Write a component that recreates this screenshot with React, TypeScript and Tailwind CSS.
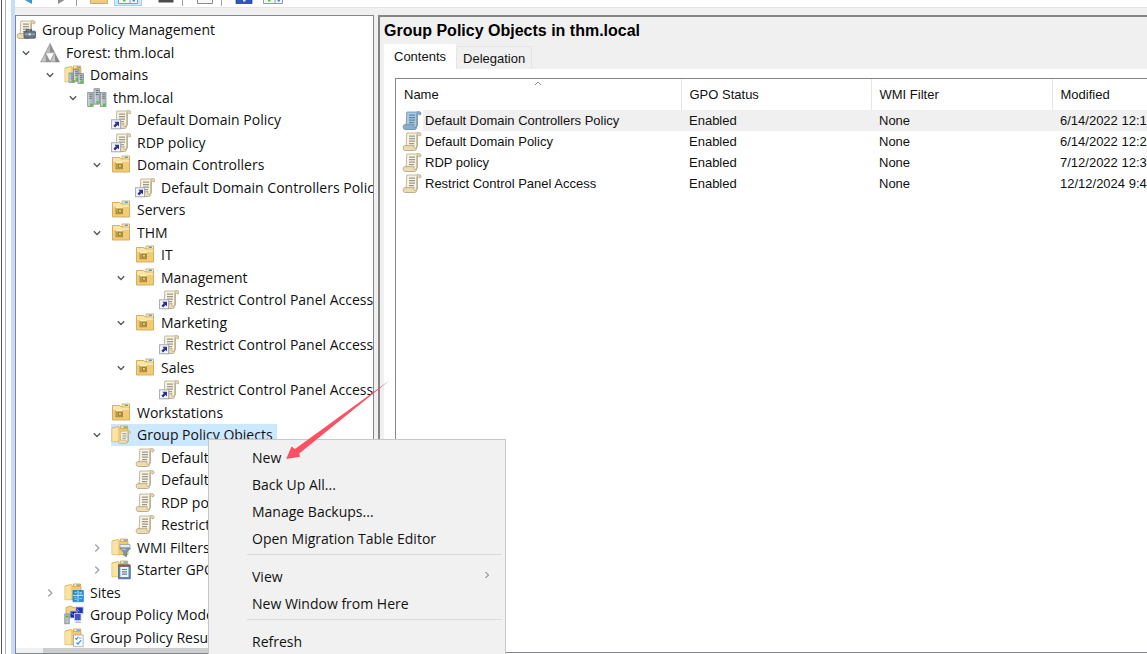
import type { ReactNode } from "react";

type IconName =
  | "console"
  | "forest"
  | "domains"
  | "domain"
  | "link"
  | "ou"
  | "gpoFolder"
  | "gpo"
  | "wmi"
  | "starter"
  | "sites"
  | "modeling"
  | "results";

type TreeNode = { label: string; icon: IconName; level: number; open?: boolean; selected?: boolean };

const tree: TreeNode[] = [
  { label: "Group Policy Management", icon: "console", level: 0 },
  { label: "Forest: thm.local", icon: "forest", level: 1, open: true },
  { label: "Domains", icon: "domains", level: 2, open: true },
  { label: "thm.local", icon: "domain", level: 3, open: true },
  { label: "Default Domain Policy", icon: "link", level: 4 },
  { label: "RDP policy", icon: "link", level: 4 },
  { label: "Domain Controllers", icon: "ou", level: 4, open: true },
  { label: "Default Domain Controllers Policy", icon: "link", level: 5 },
  { label: "Servers", icon: "ou", level: 4 },
  { label: "THM", icon: "ou", level: 4, open: true },
  { label: "IT", icon: "ou", level: 5 },
  { label: "Management", icon: "ou", level: 5, open: true },
  { label: "Restrict Control Panel Access", icon: "link", level: 6 },
  { label: "Marketing", icon: "ou", level: 5, open: true },
  { label: "Restrict Control Panel Access", icon: "link", level: 6 },
  { label: "Sales", icon: "ou", level: 5, open: true },
  { label: "Restrict Control Panel Access", icon: "link", level: 6 },
  { label: "Workstations", icon: "ou", level: 4 },
  { label: "Group Policy Objects", icon: "gpoFolder", level: 4, open: true, selected: true },
  { label: "Default Domain Controllers Policy", icon: "gpo", level: 5 },
  { label: "Default Domain Policy", icon: "gpo", level: 5 },
  { label: "RDP policy", icon: "gpo", level: 5 },
  { label: "Restrict Control Panel Access", icon: "gpo", level: 5 },
  { label: "WMI Filters", icon: "wmi", level: 4, open: false },
  { label: "Starter GPOs", icon: "starter", level: 4, open: false },
  { label: "Sites", icon: "sites", level: 2, open: false },
  { label: "Group Policy Modeling", icon: "modeling", level: 2 },
  { label: "Group Policy Results", icon: "results", level: 2 },
];

const indent = ["pl-0", "pl-0", "pl-[24px]", "pl-[47px]", "pl-[71px]", "pl-[95px]", "pl-[119px]"];

const policies = [
  { name: "Default Domain Controllers Policy", modified: "6/14/2022 12:1" },
  { name: "Default Domain Policy", modified: "6/14/2022 12:2" },
  { name: "RDP policy", modified: "7/12/2022 12:3" },
  { name: "Restrict Control Panel Access", modified: "12/12/2024 9:4" },
];

function Scroll({ blue = false }: { blue?: boolean }) {
  const paper = blue ? "#a9c8e0" : "#faf3dc";
  const edge = blue ? "#6f90aa" : "#b3a88c";
  const curl = blue ? "#86afcf" : "#ecdcae";
  const ink = blue ? "#5d87a8" : "#979797";
  return (
    <g>
      <path d="M4.800 1h11.200l-1 2v12.500l-2.500 1.500H4z" fill={paper} stroke={edge} strokeWidth=".8" />
      <path d="M15.200 2.200v13" stroke={edge} strokeWidth="1.200" />
      <path d="M14.800 1c2.500-.7 4.300 0 4.200 1.400-.1 1.500-1.900 1.700-2.600.8" fill={curl} stroke={edge} strokeWidth="1" />
      <path d="M1.300 15.700c-.3-1.400.5-2.100 1.700-2h9.300c-.8.9-.8 1.800.2 2.500.8.500 2-.1 2-1.300v1.600c0 1.300-.8 2-2.100 2H3.100c-1 0-1.700-.9-1.800-1.800z" fill={curl} stroke={edge} strokeWidth=".9" />
      <path d="M7 4.200h6M7 6.700h6M7 9.200h6M7 11.600h5" stroke={ink} strokeWidth="1.200" />
    </g>
  );
}

function Folder() {
  return (
    <g>
      <path d="M9.500 3.500V1h7v2.800z" fill="#fff6d8" stroke="#c79c4a" strokeWidth=".8" />
      <path d="M1 3l6-1.500 2 1.800h8v13.400H1z" fill="#efc870" stroke="#d4a653" strokeWidth=".8" />
      <path d="M1.200 3.400l6-1.400v14.500h-6z" fill="#fbe3a2" />
      <path d="M12.500 2.200h3.500" stroke="#4a9bd8" strokeWidth="1.200" />
    </g>
  );
}

function Server({ x, y, h }: { x: number; y: number; h: number }) {
  return (
    <g>
      <rect x={x} y={y} width="5.500" height={h} fill="#b3bcc2" stroke="#7d878e" strokeWidth=".7" />
      <path d={`M${x + 1} ${y + 1.8}h3.500M${x + 1} ${y + 3.8}h3.500M${x + 1} ${y + 5.8}h3.500`} stroke="#65717a" strokeWidth=".9" />
      <path d={`M${x + 1.2} ${y + 1}v${h - 2}`} stroke="#e3e8eb" strokeWidth=".8" />
      <rect x={x + 2.5} y={y + h - 2.8} width="2.400" height="2.200" fill="#37d51c" />
    </g>
  );
}

const drawings: Record<IconName, ReactNode> = {
  console: (
    <g>
      <Scroll />
      <path d="M10.500 11.500V9.800h5v1.700" fill="none" stroke="#45515c" strokeWidth="1.200" />
      <rect x="8" y="11.200" width="11.500" height="7" rx=".8" fill="#687887" stroke="#475562" strokeWidth=".8" />
      <path d="M8.500 14.200h10.500" stroke="#a9b6c2" />
      <rect x="12.700" y="13.300" width="2" height="2" fill="#dfe6ec" />
    </g>
  ),
  forest: (
    <g strokeLinejoin="round" strokeWidth=".6">
      <path d="M10 .4l4.600 9.400H5.400z" fill="#b9b9b9" stroke="#8c8c8c" />
      <path d="M10 .4l4.600 9.400H10z" fill="#8f8f8f" />
      <path d="M5.400 9.800h9.200L10 18.900z" fill="#fdfdfd" stroke="#9a9a9a" />
      <path d="M5.300 10L10 18.900H.6z" fill="#c4c4c4" stroke="#8c8c8c" />
      <path d="M5.300 10l4.700 8.900H6z" fill="#939393" />
      <path d="M14.700 10l4.700 8.900H10z" fill="#c4c4c4" stroke="#8c8c8c" />
      <path d="M14.700 10l4.700 8.900h-4z" fill="#888" />
    </g>
  ),
  domains: (
    <g>
      <Folder />
      <Server x={5} y={8} h={9.500} />
      <Server x={9.500} y={4.500} h={11.500} />
      <Server x={14} y={8.500} h={10} />
    </g>
  ),
  domain: (
    <g>
      <Server x={0.700} y={4.500} h={14} />
      <Server x={7} y={0.700} h={15.500} />
      <Server x={13.500} y={4.500} h={14} />
    </g>
  ),
  link: (
    <g>
      <g transform="translate(1)">
        <Scroll />
      </g>
      <rect x=".6" y="9.800" width="9" height="9" fill="#f8f8fc" stroke="#a3a8b8" strokeWidth="1" />
      <path d="M3.300 11.800h4.700v4.700l-1.500-1.500-2.400 2.400-1.700-1.700 2.400-2.400z" fill="#312e8e" />
    </g>
  ),
  ou: (
    <g>
      <path d="M11 4V1h7.500v4z" fill="#fff6d8" stroke="#c79c4a" strokeWidth=".8" />
      <path d="M1.500 2.500h7l2 1.500h8v13h-17z" fill="#f0cc76" stroke="#d4a653" strokeWidth=".9" />
      <path d="M2 3h6.300l2 1.500H18v2.500H2z" fill="#fbe4a5" />
      <path d="M13.500 2.300H17" stroke="#4a9bd8" strokeWidth="1.300" />
      <rect x="5" y="7.800" width="6.500" height="6" fill="#c9a544" stroke="#a8862f" strokeWidth=".9" />
      <path d="M4.800 7h7v1.300h-7z" fill="#fdf0c4" />
      <rect x="7.300" y="9.800" width="3" height="2.200" fill="#ffedb0" stroke="#7a5e1c" strokeWidth=".7" />
    </g>
  ),
  gpoFolder: (
    <g>
      <Folder />
      <g transform="translate(6.500 5.500) scale(.7)">
        <Scroll />
      </g>
    </g>
  ),
  gpo: <Scroll />,
  wmi: (
    <g>
      <Folder />
      <path d="M9 6.500h10v3.300H9z" fill="#e8edf1" stroke="#93a1ad" strokeWidth=".8" />
      <path d="M8.800 10.200h10.700l-4 4v4.500l-2.700-1.500v-3z" fill="#7f98ac" stroke="#5d7a91" strokeWidth=".8" />
      <path d="M10.500 11.200h4.500" stroke="#c4d5e2" />
    </g>
  ),
  starter: (
    <g>
      <Folder />
      <path d="M7.500 5h11.800v13.800H7.500z" fill="#6485a8" stroke="#466a90" strokeWidth=".8" />
      <path d="M7 4.500h12v2H7z" fill="#a0572f" />
      <path d="M9.300 7h8.200v10H9.300z" fill="#eef3f8" />
      <path d="M11 9.500h5M11 11.800h5M11 14.100h5" stroke="#5a7fa6" strokeWidth="1.200" />
    </g>
  ),
  sites: (
    <g>
      <Folder />
      <path d="M9 7.500h10.300v11.200H9z" fill="#2b92d6" stroke="#1c7fc4" strokeWidth=".8" />
      <path d="M9 12.500h10M14 7.500v11" stroke="#c9e8fa" strokeWidth=".9" />
      <path d="M10.500 9.500h2M15.500 9.500H18M15.500 11H18M10.500 14.500h2M10.500 16.500h2M15.500 15.500H18" stroke="#9fd6f5" strokeWidth=".9" />
    </g>
  ),
  modeling: (
    <g>
      <path d="M2 2.500L7 1l2 1.500h7v9H2z" fill="#f3d283" stroke="#cf9f4a" strokeWidth=".8" />
      <rect x="11.500" y="2" width="7.700" height="6.500" fill="#2633b5" stroke="#c6cbd6" strokeWidth=".9" />
      <rect x="6" y="6" width="7" height="7" fill="#1d2a9e" stroke="#c6cbd6" strokeWidth=".9" />
      <rect x="10.500" y="8.500" width="6.500" height="7" fill="#3c56cf" stroke="#c6cbd6" strokeWidth=".9" />
      <path d="M12.500 3.500l3 3M7 7.500l3 3" stroke="#8da2f0" />
      <path d="M10.500 17.800c1-1.800 6-1.800 7 0z" fill="#a4abb7" />
      <rect x=".8" y="9" width="4.400" height="9.800" fill="#b9c0c6" stroke="#7d878e" strokeWidth=".8" />
      <path d="M1.800 11.500h2.500" stroke="#37c51c" strokeWidth="1.800" />
    </g>
  ),
  results: (
    <g>
      <Folder />
      <path d="M9.500 7h9.700v11.700H9.500z" fill="#fbfdff" stroke="#9aa6b2" strokeWidth=".8" />
      <path d="M11.200 10l1.200 1.300 2-2.500M12.500 14.500l1.500 1.600 3.200-4" fill="none" stroke="#3d8fd0" strokeWidth="1.100" />
      <path d="M15 10h2.700" stroke="#a4b1be" />
    </g>
  ),
};

function TreeIcon({ name }: { name: IconName }) {
  return (
    <svg viewBox="0 0 20 20" className="size-5 shrink-0" aria-hidden="true">
      {drawings[name]}
    </svg>
  );
}

function Chevron({ open }: { open: boolean }) {
  return (
    <svg viewBox="0 0 10 10" className="size-2.5" fill="none" aria-hidden="true">
      {open ? (
        <path d="M1.800 3.300L5 6.500l3.200-3.200" stroke="#555" strokeWidth="1.300" />
      ) : (
        <path d="M3.300 1.500L6.800 5 3.300 8.500" stroke="#a3a3a3" strokeWidth="1.300" />
      )}
    </svg>
  );
}

function ToolButton({ label, className = "", children }: { label: string; className?: string; children: ReactNode }) {
  return (
    <button type="button" aria-label={label} className={`flex h-1.5 w-7 justify-center ${className}`}>
      <svg viewBox="0 0 20 6" className="h-1.5 w-5 shrink-0" aria-hidden="true">
        {children}
      </svg>
    </button>
  );
}

const panesDrawing = (
  <g>
    <path d="M.5-1v4.500h19V-1" fill="#f4f6f8" stroke="#8f9aa5" />
    <path d="M12-1v4.500" stroke="#8f9aa5" />
    <path d="M5 0h2.500v1.500H5z" fill="#54c43d" />
    <path d="M14.500 0H17v1.500h-2.500z" fill="#3d8fe0" />
  </g>
);

function Toolbar() {
  return (
    <div className="flex h-2 items-start overflow-hidden border-b border-[#e3e3e3] bg-white">
      <ToolButton label="Back">
        <path d="M4-1h9v5z" fill="#3b97d3" />
      </ToolButton>
      <ToolButton label="Forward" className="ml-1">
        <path d="M7-1h8L7 4z" fill="#8f8f8f" />
      </ToolButton>
      <span className="ml-px h-1.5 w-px bg-[#a0a0a0]" />
      <ToolButton label="Up one level" className="ml-2">
        <path d="M1.500-1h17v4.500h-17z" fill="#eccb86" stroke="#c79c4a" strokeWidth=".8" />
      </ToolButton>
      <ToolButton label="Show or hide console tree" className="ml-px border-x border-b border-[#a6d4f7] bg-[#cce8ff]">
        {panesDrawing}
      </ToolButton>
      <ToolButton label="Delete" className="ml-2.5">
        <path d="M2.500-1h15v3.500h-15z" fill="#4c4c4c" />
      </ToolButton>
      <span className="ml-0.5 h-1.5 w-px bg-[#a0a0a0]" />
      <ToolButton label="Properties" className="ml-2">
        <path d="M2.500-1v4.500h15V-1" fill="#f7f7f7" stroke="#8b8b8b" />
      </ToolButton>
      <span className="ml-0.5 h-1.5 w-px bg-[#a0a0a0]" />
      <ToolButton label="Help" className="ml-2">
        <path d="M2-1h16v4.500H2z" fill="#2f56b8" stroke="#24409a" strokeWidth=".8" />
        <path d="M9 0h2.500v1.500H9z" fill="#dfe8ff" />
      </ToolButton>
      <ToolButton label="Show or hide action pane" className="ml-px">
        {panesDrawing}
      </ToolButton>
    </div>
  );
}

function TreePane() {
  return (
    <nav aria-label="Console tree" className="flex w-[359px] shrink-0 flex-col border border-[#828790] bg-white">
      <ul className="min-h-0 flex-1 overflow-hidden pt-[3px] font-['Open_Sans','Noto_Sans',sans-serif] text-sm text-[#111]">
        {tree.map((node, i) => (
          <li key={i} className={`flex items-center odd:h-[22px] even:h-[23px] ${indent[node.level]}`}>
            {node.level > 0 && (
              <span className="flex w-6 shrink-0 justify-center pr-1">
                {node.open !== undefined && <Chevron open={node.open} />}
              </span>
            )}
            <button
              type="button"
              className={`flex h-full items-center gap-1.5 pr-1 whitespace-nowrap ${node.selected ? "bg-[#cce8ff]" : ""}`}
            >
              <TreeIcon name={node.icon} />
              {node.label}
            </button>
          </li>
        ))}
      </ul>
      <div className="h-[5px] shrink-0 bg-[#f0f0f0] pr-10 pl-[27px]">
        <div className="h-full bg-[#cdcdcd]" />
      </div>
    </nav>
  );
}

function PolicyTable() {
  const head = "relative h-[31px] border-r border-[#e5e5e5] px-2 text-left font-normal";
  return (
    <table className="w-full table-fixed border-collapse text-[13px] leading-5 text-[#111]">
      <colgroup>
        <col className="w-[285px]" />
        <col className="w-[190px]" />
        <col className="w-[181px]" />
        <col />
      </colgroup>
      <thead>
        <tr>
          <th className={head}>
            <svg
              viewBox="0 0 8 5"
              className="absolute top-0.5 left-1/2 h-[5px] w-2 -translate-x-1/2"
              fill="none"
              aria-hidden="true"
            >
              <path d="M1 4l3-3 3 3" stroke="#8a8a8a" />
            </svg>
            Name
          </th>
          <th className={head}>GPO Status</th>
          <th className={head}>WMI Filter</th>
          <th className="px-2 text-left font-normal">Modified</th>
        </tr>
      </thead>
      <tbody>
        {policies.map((p, i) => {
          const fill = i === 0 ? "bg-[#f0f0f0]" : "";
          return (
            <tr key={p.name} className="h-[21px] whitespace-nowrap">
              <td className="p-0">
                <div className="flex h-[21px] items-center gap-px pl-1.5">
                  <svg viewBox="0 0 20 20" className="size-5 shrink-0" aria-hidden="true">
                    <Scroll blue={i === 0} />
                  </svg>
                  <span className={`flex h-full flex-1 items-center pl-0.5 ${fill}`}>{p.name}</span>
                </div>
              </td>
              <td className={`px-2 py-0 ${fill}`}>Enabled</td>
              <td className={`px-2 py-0 ${fill}`}>None</td>
              <td className={`overflow-hidden px-2 py-0 ${fill}`}>{p.modified}</td>
            </tr>
          );
        })}
      </tbody>
    </table>
  );
}

function DetailPane() {
  return (
    <main className="flex min-w-0 flex-1 flex-col border-t-2 border-l-2 border-[#858585] bg-[#f0f0f0] pl-1 font-['Liberation_Sans',Arial,sans-serif]">
      <h1 className="h-[27px] text-base leading-[28px] font-bold whitespace-nowrap text-black">
        Group Policy Objects in thm.local
      </h1>
      <div role="tablist" className="flex h-[25px] shrink-0 items-end text-[13px] text-[#111]">
        <button type="button" role="tab" aria-selected="true" className="h-[25px] bg-white px-2.5">
          Contents
        </button>
        <button
          type="button"
          role="tab"
          aria-selected="false"
          className="h-[23px] border border-b-0 border-[#e5e5e5] px-1.5 pt-0.5"
        >
          Delegation
        </button>
      </div>
      <section className="flex min-h-0 flex-1 flex-col bg-white pt-[9px] pb-px pl-[11px]">
        <div className="min-h-0 flex-1 overflow-hidden border-y border-l border-[#828790]">
          <PolicyTable />
        </div>
      </section>
    </main>
  );
}

function MenuItem({ label, submenu = false }: { label: string; submenu?: boolean }) {
  return (
    <button
      type="button"
      role="menuitem"
      className="flex h-[27px] w-full items-center justify-between pr-3.5 pl-[43px] text-left whitespace-nowrap"
    >
      {label}
      {submenu && (
        <svg viewBox="0 0 8 8" className="mb-1 size-2" fill="none" aria-hidden="true">
          <path d="M2.500 1l3 3-3 3" stroke="#666" />
        </svg>
      )}
    </button>
  );
}

function MenuLine() {
  return <hr className="mt-0.5 mr-[3px] mb-2 ml-[38px] border-t border-[#dcdcdc]" />;
}

function ContextMenu() {
  return (
    <div
      role="menu"
      className="absolute top-[439px] left-[208px] w-[298px] border border-[#c8c8c8] bg-[#f1f1f1] py-1 font-['Open_Sans','Noto_Sans',sans-serif] text-sm text-[#111]"
    >
      <MenuItem label="New" />
      <MenuItem label="Back Up All..." />
      <MenuItem label="Manage Backups..." />
      <MenuItem label="Open Migration Table Editor" />
      <MenuLine />
      <MenuItem label="View" submenu />
      <MenuItem label="New Window from Here" />
      <MenuLine />
      <MenuItem label="Refresh" />
    </div>
  );
}

function PointerArrow() {
  return (
    <svg viewBox="0 0 106 82" className="absolute top-[379px] left-[285px] h-[82px] w-[106px]" aria-hidden="true">
      <path d="M105 1L10 70 6.500 67.500 1.200 80 15 77.700 14.300 74.500z" fill="#fd5062" />
    </svg>
  );
}

export default function App() {
  return (
    <div className="relative flex h-screen overflow-hidden bg-white pl-px">
      <div className="w-1 shrink-0 border-l border-[#555]" />
      <div className="w-1.5 shrink-0 border-l border-[#b0b0b0]" />
      <div className="w-1 shrink-0 bg-[#c6ddfa]" />
      <div className="flex min-w-0 flex-1 flex-col bg-[#f0f0f0]">
        <Toolbar />
        <div className="flex min-h-0 flex-1 gap-1 pt-[7px]">
          <TreePane />
          <DetailPane />
        </div>
      </div>
      <ContextMenu />
      <PointerArrow />
    </div>
  );
}
